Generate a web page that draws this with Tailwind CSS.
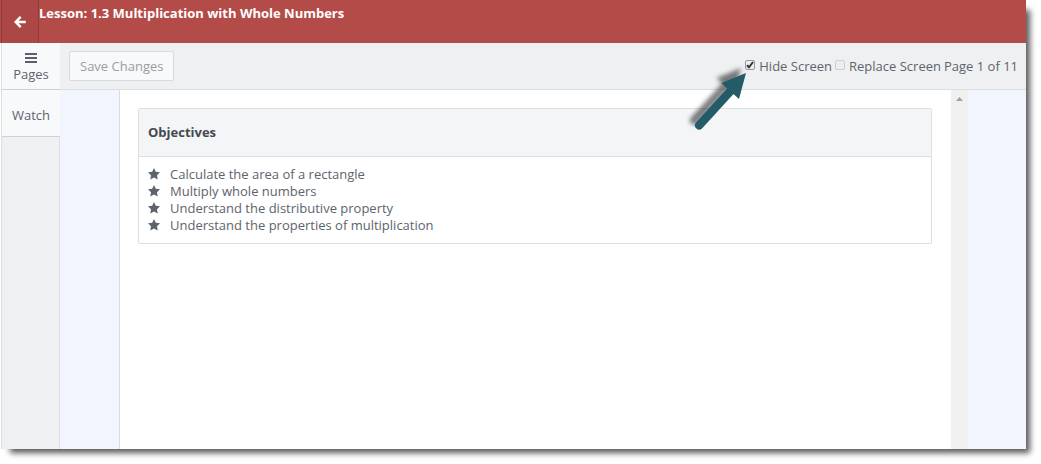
<!DOCTYPE html>
<html lang="en">
<head>
<meta charset="utf-8">
<title>Lesson: 1.3 Multiplication with Whole Numbers</title>
<script src="https://cdn.jsdelivr.net/npm/@tailwindcss/browser@4"></script>
</head>
<body class="flex h-screen bg-white pr-[15px] pb-[15px] font-['Open_Sans',sans-serif] text-[13px] leading-[17px] text-[#5d646c]">
<svg class="hidden"><symbol id="star" viewBox="0 0 12 12"><path d="M6 0 7.800 3.700 12 4.300 9 7.200 9.700 11.500 6 9.500 2.300 11.500 3 7.200 0 4.300 4.200 3.700Z"/></symbol></svg>
<div class="relative flex min-w-0 flex-1 flex-col shadow-[7px_7px_6px_-3px_rgba(0,0,0,0.65)]">
  <header class="flex h-[43px] shrink-0 bg-[#b34c48] text-white">
    <a href="#" aria-label="Back" class="ml-px flex w-[38px] items-center justify-center border-x border-[#8f3c3a] bg-[#ab4845]">
      <svg class="h-3 w-3" viewBox="0 0 12 12" fill="none" stroke="currentColor" stroke-width="2.4"><path d="M6.7 0.9 1.7 6l5 5.1M2 6h9.8"/></svg>
    </a>
    <h1 class="pt-[5px] font-bold">Lesson: 1.3 Multiplication with Whole Numbers</h1>
  </header>
  <div class="flex min-h-0 flex-1 bg-white pl-px">
    <nav class="flex w-[59px] shrink-0 flex-col border-l border-[#dcdee0] bg-[#eff0f2]">
      <a href="#" class="flex h-[47px] flex-col items-center border-b border-[#c5d5db] bg-[#f7f9fb] pt-2.5">
        <svg class="mb-[3px] h-2.5 w-3" viewBox="0 0 12 10" fill="#58606b"><path d="M0 0h12v2H0zM0 4h12v2H0zM0 8h12v2H0z"/></svg>
        Pages
      </a>
      <a href="#" class="flex h-[47px] items-center justify-center border-b border-[#c5d5db] bg-[#f7f9fb] pb-px">
        <span class="pt-1.5">Watch</span>
      </a>
      <div class="flex-1 border-r border-[#dcdee0]"></div>
    </nav>
    <div class="flex min-w-0 flex-1 flex-col">
      <div class="flex h-[47px] shrink-0 items-center border-b border-[#dcdee0] bg-[#eff0f2] pr-2 pl-[9px]">
        <button type="button" class="h-[30px] rounded-xs border border-[#d5dce0] bg-[#f7f9fb] px-2.5 text-[#9b9da0]">Save Changes</button>
        <div class="ml-auto flex items-center">
          <label class="flex items-center">
            <span class="relative mr-1 mb-0.5 flex">
              <input type="checkbox" checked class="peer h-2.5 w-2.5 appearance-none rounded-xs border border-[#999999] bg-[#eeeeee]">
              <svg class="pointer-events-none absolute inset-0 hidden h-2.5 w-2.5 peer-checked:block" viewBox="0 0 10 10" fill="none" stroke="#333" stroke-width="2"><path d="M2 5.2 4 7.3 8 2"/></svg>
            </span>
            Hide Screen
          </label>
          <label class="ml-[3px] flex items-center">
            <input type="checkbox" class="mr-1 mb-0.5 h-2.5 w-2.5 appearance-none rounded-xs border border-[#cfcfcf] bg-[#eeeeee]">
            Replace Screen
          </label>
          <span class="ml-[3px]">Page 1 of 11</span>
        </div>
      </div>
      <div class="flex min-h-0 flex-1 bg-[#f0f5fe] pr-[58px] pl-[59px]">
        <main class="min-w-0 flex-1 border-l border-[#d9dbdd] bg-white px-[18px] pt-[18px] pr-[19px]">
          <section class="rounded-xs border border-[#dcdee0]">
            <h2 class="flex h-12 items-center border-b border-[#dcdee0] bg-[#f4f5f7] px-[9px] font-bold text-[#444950]">Objectives</h2>
            <ul class="px-[9px] pt-[9px] pb-[9px]">
              <li class="flex items-center gap-2.5"><svg class="mb-px h-3 w-3" fill="#5d646c"><use href="#star"/></svg>Calculate the area of a rectangle</li>
              <li class="flex items-center gap-2.5"><svg class="mb-px h-3 w-3" fill="#5d646c"><use href="#star"/></svg>Multiply whole numbers</li>
              <li class="flex items-center gap-2.5"><svg class="mb-px h-3 w-3" fill="#5d646c"><use href="#star"/></svg>Understand the distributive property</li>
              <li class="flex items-center gap-2.5"><svg class="mb-px h-3 w-3" fill="#5d646c"><use href="#star"/></svg>Understand the properties of multiplication</li>
            </ul>
          </section>
        </main>
        <div class="flex w-[17px] shrink-0 justify-center bg-[#f0f0f0] pt-[7px]">
          <svg class="h-1 w-[7px]" viewBox="0 0 7 4" fill="#a0a0a0"><path d="M3.5 0 7 4H0Z"/></svg>
        </div>
      </div>
    </div>
  </div>
  <!-- callout arrow pointing at the Hide Screen box -->
  <svg class="pointer-events-none absolute top-[60px] right-[276px] h-[80px] w-[70px] overflow-visible drop-shadow-[-5px_-5px_2px_rgba(0,0,0,0.5)]" viewBox="680 60 70 80" fill="#235b69"><path d="M746 73 739 99 733.5 94 702 128.500A4.300 4.300 0 0 1 695.500 123L727 88.500 721.500 83Z"/></svg>
</div>
</body>
</html>
